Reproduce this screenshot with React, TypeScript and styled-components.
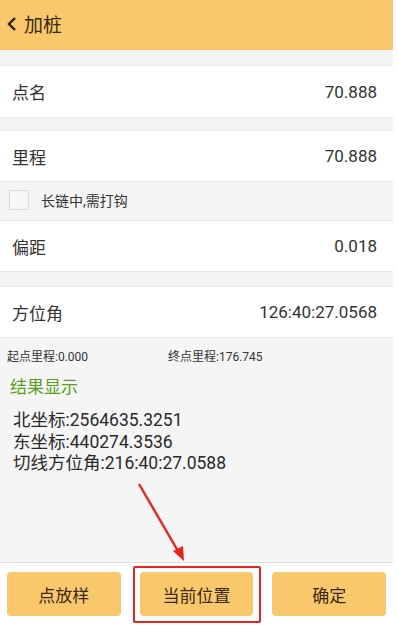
import styled, { createGlobalStyle } from "styled-components";

const GlobalStyle = createGlobalStyle`
  html, body {
    margin: 0;
    padding: 0;
    background: #ffffff;
  }
  * {
    box-sizing: border-box;
  }
`;

const Page = styled.div`
  position: relative;
  width: 393px;
  height: 625px;
  display: flex;
  flex-direction: column;
  background: #f5f5f5;
  font-family: Roboto, "Noto Sans CJK SC", sans-serif;
  color: #333;
  overflow: hidden;
`;

const Header = styled.header`
  height: 50px;
  flex: none;
  display: flex;
  align-items: center;
  gap: 6px;
  padding: 0 0 3px 6px;
  background: #f9c86c;
  color: #3b2a12;
  font-size: 19px;
`;

const Shade = styled.div<{ $h: number }>`
  height: ${(p) => p.$h}px;
  flex: none;
  background: #f3f3f6;
`;

const Row = styled.div<{ $h: number }>`
  height: ${(p) => p.$h}px;
  flex: none;
  display: flex;
  align-items: center;
  justify-content: space-between;
  padding: 0 16px 0 12px;
  background: #fff;
  border-top: 1px solid #e9e9e9;
  border-bottom: 1px solid #e9e9e9;
  font-size: 17px;
  color: #333;
`;

const Value = styled.span`
  font-size: 17px;
  color: #333;
`;

const CheckRow = styled.label`
  height: 38px;
  flex: none;
  display: flex;
  align-items: center;
  gap: 12px;
  padding: 0 0 3px 9px;
  background: #f4f4f4;
  font-size: 14px;
  color: #333;
`;

const Box = styled.span`
  width: 20px;
  height: 20px;
  border: 1px solid #dcdcdc;
  border-radius: 2px;
  background: #f7f7f7;
`;

const Info = styled.section`
  flex: 1;
  display: flex;
  flex-direction: column;
  padding: 8px 0 0 7px;
`;

const Range = styled.div`
  display: flex;
  font-size: 12px;
  color: #333;
  height: 19px;
  align-items: center;
  span:first-child {
    width: 161px;
  }
`;

const ResultTitle = styled.div`
  margin: 8px 0 0 3px;
  font-size: 17px;
  color: #5a9e1c;
`;

const Results = styled.div`
  margin: 12px 0 0 6px;
  font-size: 17.5px;
  line-height: 21.5px;
  color: #2a2a2a;
`;

const Footer = styled.footer`
  height: 63px;
  flex: none;
  display: flex;
  align-items: center;
  gap: 19px;
  padding: 0 7px;
  background: #fff;
  border-top: 1px solid #dedede;
`;

const Button = styled.button`
  width: 114px;
  height: 44px;
  border: none;
  border-radius: 4px;
  background: #f9c86c;
  color: #3b2a12;
  font-family: inherit;
  font-size: 17px;
`;

const Highlight = styled.div`
  position: absolute;
  left: 133px;
  top: 566px;
  width: 128px;
  height: 57px;
  border: 2px solid #e8241e;
  border-radius: 2px;
`;

const Arrow = styled.svg`
  position: absolute;
  left: 0;
  top: 0;
  pointer-events: none;
`;

const rows = [
  { label: "点名", value: "70.888" },
  { label: "里程", value: "70.888" },
];

export default function App() {
  return (
    <>
      <GlobalStyle />
      <Page>
        <Header>
          <svg width="12" height="18" viewBox="0 0 12 18">
            <path d="M9 3 L3 9 L9 15" fill="none" stroke="#2b1d0a" strokeWidth="2.4" />
          </svg>
          <span>加桩</span>
        </Header>
        <Shade $h={15} />
        <Row $h={53}>
          <span>{rows[0].label}</span>
          <Value>{rows[0].value}</Value>
        </Row>
        <Shade $h={12} />
        <Row $h={52}>
          <span>{rows[1].label}</span>
          <Value>{rows[1].value}</Value>
        </Row>
        <CheckRow>
          <Box />
          <span>长链中,需打钩</span>
        </CheckRow>
        <Row $h={52}>
          <span>偏距</span>
          <Value>0.018</Value>
        </Row>
        <Shade $h={14} />
        <Row $h={52}>
          <span>方位角</span>
          <Value>126:40:27.0568</Value>
        </Row>
        <Info>
          <Range>
            <span>起点里程:0.000</span>
            <span>终点里程:176.745</span>
          </Range>
          <ResultTitle>结果显示</ResultTitle>
          <Results>
            <div>北坐标:2564635.3251</div>
            <div>东坐标:440274.3536</div>
            <div>切线方位角:216:40:27.0588</div>
          </Results>
        </Info>
        <Footer>
          <Button>点放样</Button>
          <Button>当前位置</Button>
          <Button>确定</Button>
        </Footer>
        <Highlight />
        <Arrow width="393" height="625">
          <line x1="139" y1="484" x2="178" y2="551" stroke="#e8241e" strokeWidth="2.4" />
          <polygon points="184,561 173,551 183,546" fill="#e8241e" />
        </Arrow>
      </Page>
    </>
  );
}
